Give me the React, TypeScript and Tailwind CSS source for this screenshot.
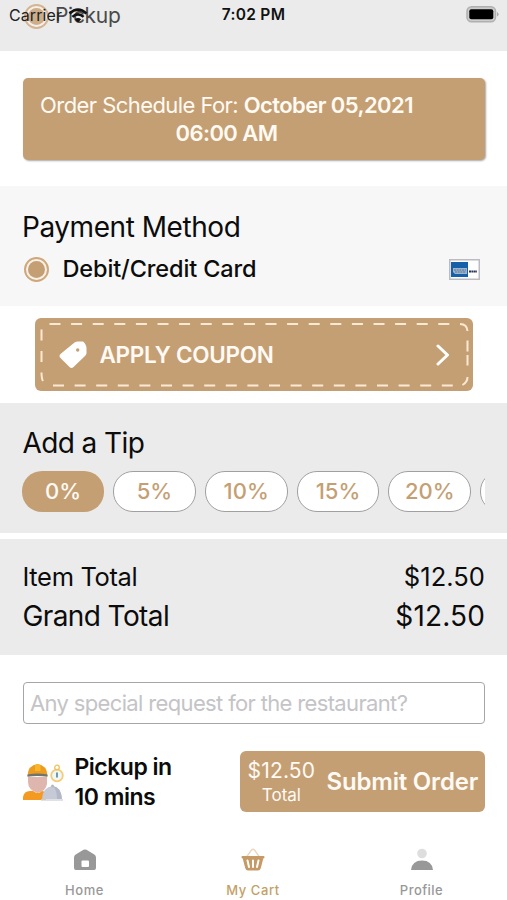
import React from "react";

const Radio = () => (
  <span className="flex h-[25px] w-[25px] shrink-0 items-center justify-center rounded-full border-2 border-[#cfa77c] bg-[#f9f1e8]">
    <span className="h-[17px] w-[17px] rounded-full bg-[#c59f74]" />
  </span>
);

function Header() {
  return (
    <header className="relative h-[51px] bg-[#ebebeb]">
      <div className="flex h-8 items-center gap-[6px] pl-6 opacity-80">
        <Radio />
        <span className="text-[21px] leading-8 tracking-[-0.3px] text-[#222]">Pickup</span>
      </div>
      <div className="absolute inset-x-0 top-0 grid h-[30px] grid-cols-3 items-center px-[9px]">
        <div className="flex items-center">
          <span className="w-[59px] whitespace-nowrap text-[16px] tracking-[0.1px] text-[#222]">Carrier</span>
          <svg width="20" height="15" viewBox="0 0 20 15" fill="none" stroke="#111" strokeWidth="2.6">
            <path d="M1.5 5.5Q10-2.2 18.5 5.5" />
            <path d="M4.4 8.9Q10 3.8 15.6 8.9" />
            <path d="M10 14.5 6.8 11.3Q10 8.7 13.2 11.3Z" fill="#111" stroke="none" />
          </svg>
        </div>
        <span className="whitespace-nowrap text-center text-[15.5px] font-semibold tracking-[0.3px] text-[#111]">7:02 PM</span>
        <svg className="-mr-[1px] -mt-[2px] justify-self-end" width="34" height="18" viewBox="0 0 34 18">
          <rect x="2" y="1.7" width="28.500" height="15" rx="4.5" fill="#ccc" stroke="#b0b0b0" strokeWidth="1.5" />
          <rect x="4.3" y="4.200" width="24" height="10" rx="2" fill="#000" />
          <path d="M32 7v4.5q1.6-.8 1.6-2.2T32 7Z" fill="#aaa" />
        </svg>
      </div>
    </header>
  );
}

const tips = ["5%", "10%", "15%", "20%"];

export default function App() {
  return (
    <main className="flex h-[900px] w-[507px] flex-col overflow-hidden bg-white font-['Inter',sans-serif] text-[#0c0c0c]">
      <Header />

      <section className="h-[135px] px-[22px] pl-[22.5px] pt-[27px]">
        <div className="h-[82px] rounded-[5px] bg-[#c59f74] pl-[16.5px] pt-[12.5px] text-[22px] leading-[28px] text-[#fffaf2] shadow-[1px_1px_2px_rgba(0,0,0,0.35)]">
          <div className="w-[375px] text-center">
            <div className="whitespace-nowrap tracking-[-0.57px]">
              Order Schedule For: <b className="font-semibold">October 05,2021</b>
            </div>
            <b className="font-semibold tracking-[-0.55px]">06:00 AM</b>
          </div>
        </div>
      </section>

      <section className="h-[120px] bg-[#f7f7f7] px-[22px] pt-[22px]">
        <h2 className="text-[28px] leading-[38px] tracking-[-0.45px]">Payment Method</h2>
        <div className="mt-[10px] flex h-[26px] items-center pl-[2px]">
          <Radio />
          <span className="ml-[13.5px] text-[23.5px] font-medium tracking-[-0.12px]">Debit/Credit Card</span>
          <svg className="ml-auto mr-[5px]" width="31" height="21" viewBox="0 0 31 21">
            <rect x=".75" y=".75" width="29.5" height="19.5" fill="#fff" stroke="#bcbcc0" strokeWidth="1.5" />
            <path d="M2 3h17v15H2z" fill="#1560a8" />
            <path d="M4 9h14v6H6l-2-2z" fill="#9fb3c9" />
            <path d="M5 11h12M6 13h11" stroke="#4c759f" strokeWidth="1" strokeDasharray="2 .7" />
            <path d="M20 12.5h8" stroke="#25345a" strokeWidth="2" strokeDasharray="2 .4" />
          </svg>
        </div>
      </section>

      <section className="h-[97px] pl-[34.5px] pr-[34px] pt-[12px]">
        <button className="relative flex h-[73px] w-full items-center rounded-[6px] bg-[#c59f74] pl-[24px] pr-[23px] text-[#fffaf4]">
          <svg className="absolute left-0 top-0" width="439" height="73" fill="none" stroke="#fbe9d4" strokeWidth="2">
            <path d="M14.500 6H418" strokeDasharray="11 10.600" />
            <path d="M18 67.500H418" strokeDasharray="11 10.600" />
            <path d="M6.500 11.500V54M6.500 54.500q0 6 1.500 8.500" strokeDasharray="11 10.500" />
            <path d="M425 6q7 0 7.500 7M432.500 22.500v11M432.500 37v10.500M432.500 59q0 5-5 8" />
          </svg>
          <svg width="28" height="28" viewBox="0 0 28 28">
            <path d="M15.500 1.500Q17 .5 19 .5h5Q27.500 3 27.500 8v4q0 1.500-1.500 3L14.500 26q-2 2-4 0L1.500 17q-2-2 0-4Z" fill="#fff" />
            <circle cx="18.700" cy="9" r="1.700" fill="#c59f74" />
          </svg>
          <span className="ml-[13px] text-[22.500px] font-semibold tracking-[-0.3px]">APPLY COUPON</span>
          <svg className="ml-auto" width="14" height="22" viewBox="0 0 14 22" fill="none" stroke="#fff" strokeWidth="3">
            <path d="m2 2 9.500 9L2 20" strokeLinecap="round" strokeLinejoin="round" />
          </svg>
        </button>
      </section>

      <section className="h-[130px] bg-[#ebebeb] px-[22px] pt-[21px]">
        <h2 className="pl-[0.5px] text-[28px] leading-[38px] tracking-[-0.6px]">Add a Tip</h2>
        <div className="mt-[9px] flex gap-[9px] overflow-hidden text-[22px] font-medium text-[#c59f74]">
          <button className="h-[41px] w-[82px] shrink-0 rounded-[20px] bg-[#c59f74] text-[#fffaf4]">0%</button>
          {tips.map((tip) => (
            <button key={tip} className="h-[41px] w-[82.8px] shrink-0 rounded-[20px] border-[1.500px] border-[#a0a0a0] bg-white">{tip}</button>
          ))}
          <button className="h-[41px] w-[83px] shrink-0 rounded-[20px] border border-[#a0a0a0] bg-white" aria-label="More" />
        </div>
      </section>

      <section className="mt-[6px] h-[116px] bg-[#ebebeb] px-[22px] pt-[19px]">
        <div className="flex h-[38px] items-center justify-between pl-[0.5px] text-[25.500px]">
          <span className="tracking-[-0.35px]">Item Total</span>
          <span className="tracking-[0.05px]">$12.50</span>
        </div>
        <div className="flex h-[40px] items-center justify-between pl-[0.5px] text-[28px]">
          <span className="tracking-[-0.6px]">Grand Total</span>
          <span className="tracking-[0.15px]">$12.50</span>
        </div>
      </section>

      <section className="pl-[22.5px] pr-[22px] pt-[27px]">
        <input
          className="block h-[42px] w-full rounded-[4px] border-[1.500px] border-[#a6a6a6] px-[6.5px] text-[22px] tracking-[-0.65px] placeholder:text-[#c4c4c6]"
          placeholder="Any special request for the restaurant?"
        />
        <div className="mt-[27px] flex h-[61px] items-center">
          <svg width="41" height="40" viewBox="0 0 41 40">
            <path d="M5 15h19v7q-1 7-9.500 9Q5 28 5 20Z" fill="#dfb6ae" />
            <path d="M4.500 14Q5 3 14.500 2 24 3 24.500 14Z" fill="#ee9c20" />
            <path d="M12 3q3-1.500 5.500 0v6h-5.500Z" fill="#f7b52c" />
            <path d="M4.500 12.500q10-2 20 0v2.300q-10-1.500-20 0Z" fill="#70746f" />
            <path d="M0 38V35q1-6 7-6h3q5 4 9 0l4 1v8Z" fill="#f49a20" />
            <path d="M19 37q1-12 10.500-13Q38 25 39 37Z" fill="#c6cad6" />
            <path d="M30 24q8 1 9 13h-5q0-9-4-13Z" fill="#b3b8c6" />
            <path d="M18 38h22" stroke="#d5d7df" strokeWidth="1.500" />
            <circle cx="29.500" cy="24" r="1.500" fill="#b3b8c6" />
            <circle cx="34" cy="13.500" r="5.800" fill="#eef7fa" stroke="#f5cc73" strokeWidth="1.800" />
            <circle cx="34" cy="5.500" r="2.300" fill="none" stroke="#eec25e" strokeWidth="1.300" />
            <path d="M34 10.500v5" stroke="#608995" strokeWidth="1.700" />
          </svg>
          <div className="ml-[11px] text-[23px] font-semibold leading-[30px] tracking-[-0.5px]">
            Pickup in<br />10 mins
          </div>
          <button className="ml-auto flex h-[61px] w-[245.5px] items-center justify-between rounded-[6px] bg-[#c59f74] pl-[8px] pr-[7px] text-[#fffaf4]">
            <span className="flex flex-col items-center">
              <span className="text-[21px] leading-[26px] tracking-[0.2px]">$12.50</span>
              <span className="text-[17px] leading-[22px]">Total</span>
            </span>
            <span className="whitespace-nowrap text-[24px] font-semibold tracking-[-0.2px]">Submit Order</span>
          </button>
        </div>
      </section>

      <nav className="mt-[36px] grid grid-cols-3 text-center text-[13px] font-medium tracking-[0.6px] text-[#989898]">
        <div className="flex flex-col items-center">
          <svg width="28" height="24" viewBox="0 0 28 24">
            <path d="M3 9.500q0-2 1.700-3l7.800-4.700q1.500-.8 3 0l7.800 4.700q1.700 1 1.700 3v10.500q0 2-2 2h-18Q3 22 3 20Z" fill="#989898" />
            <rect x="10.500" y="12.500" width="7.500" height="6.500" rx="1" fill="#fff" />
          </svg>
          <span className="mt-[8px] leading-5">Home</span>
        </div>
        <div className="-ml-[1px] flex flex-col items-center text-[#c59f66]">
          <svg width="28" height="24" viewBox="0 0 28 24">
            <path d="m7.500 9 5-7q1.500-1.500 3 0l5 7" fill="none" stroke="#ead7bf" strokeWidth="1.300" />
            <path d="M3.500 8h21q1.200 0 1 1.300-.2 1.200-1.200 1.200l-2.500 9.500q-.6 2.500-3 2.500H9.200q-2.400 0-3-2.500L3.700 10.500q-1.200-.1-1.200-1.200Q2.300 8 3.500 8Z" fill="#c59a66" />
            <path d="m8.500 12.500 1.500 6.500M14 12.500V19M19.500 12.500 18 19" stroke="#fff" strokeWidth="2" strokeLinecap="round" />
          </svg>
          <span className="mt-[8px] leading-5">My Cart</span>
        </div>
        <div className="-ml-[2px] flex flex-col items-center">
          <svg width="28" height="24" viewBox="0 0 28 24">
            <circle cx="14" cy="5.500" r="4.800" fill="#dedede" />
            <path d="M3 22q1-9.500 11-9.500t11 9.500Z" fill="#989898" />
          </svg>
          <span className="mt-[8px] leading-5 tracking-[0.45px]">Profile</span>
        </div>
      </nav>
    </main>
  );
}
